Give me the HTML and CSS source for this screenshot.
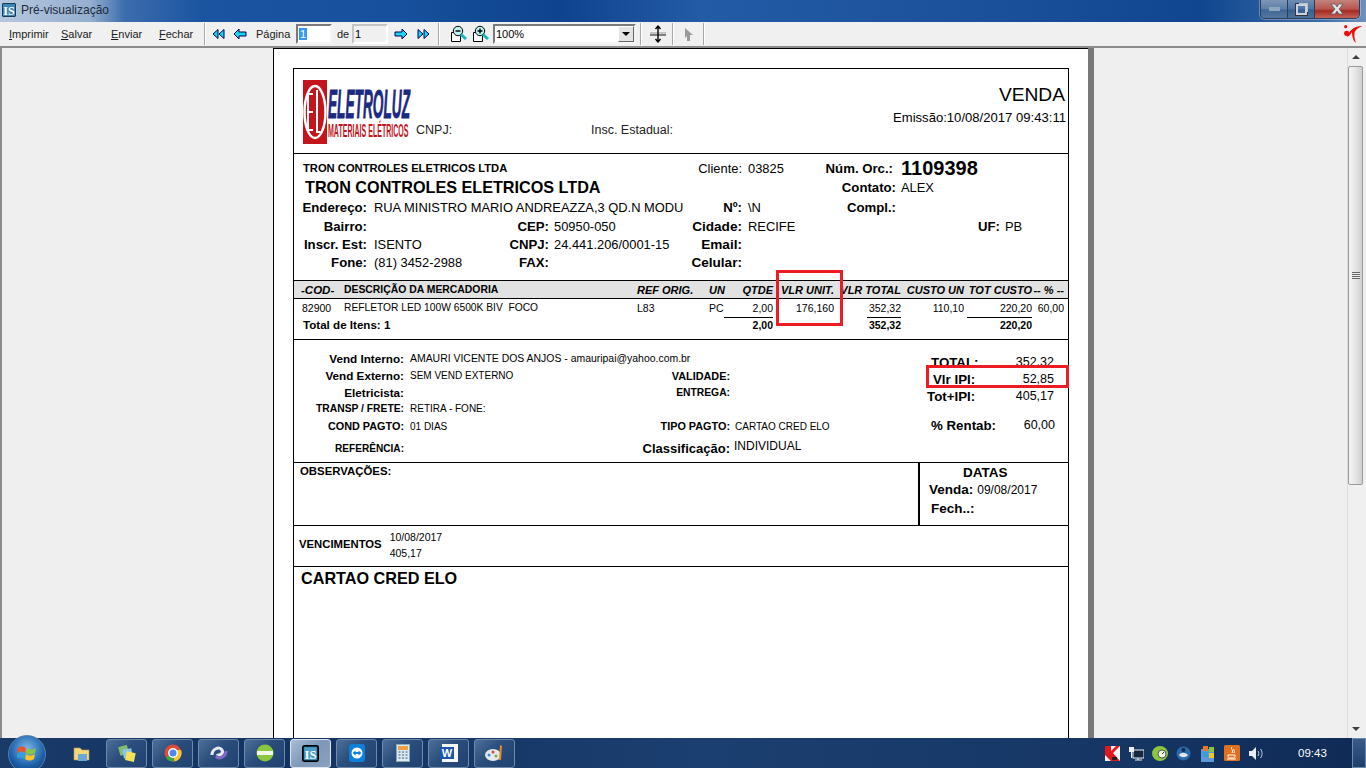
FILE: index.html
```html
<!DOCTYPE html>
<html lang="pt-BR">
<head>
    <meta charset="UTF-8">
    <title>Pré-visualização</title>
    <link rel="stylesheet" href="styles.css">
</head>
<body>
<div class="window">

    <div class="titlebar">
        <svg class="app_icon" width="16" height="16" viewBox="0 0 16 16"><rect x=".5" y=".5" width="15" height="15" rx="2" fill="#123a5c" stroke="#bcd"/><rect x="2" y="2" width="12" height="12" fill="#3c86b8"/><text x="8" y="13" text-anchor="middle" class="app_icon_text">IS</text></svg>
        <span class="title_text">Pré-visualização</span>
        <div class="win_buttons">
            <div class="win_btn win_min"><i></i></div>
            <div class="win_btn win_max"><i></i></div>
            <div class="win_btn win_close">
                <svg width="16" height="12" viewBox="0 0 16 12"><path d="M2 1h4l2 3 2-3h4l-4 5 4 5h-4l-2-3-2 3H2l4-5z" fill="#e4e6ee" stroke="#555" stroke-width=".7"/></svg>
            </div>
        </div>
    </div>

    <div class="toolbar">
        <span class="tool_text t_print"><u>I</u>mprimir</span>
        <span class="tool_text t_save"><u>S</u>alvar</span>
        <span class="tool_text t_send"><u>E</u>nviar</span>
        <span class="tool_text t_close"><u>F</u>echar</span>
        <div class="tb_sep sep1"></div>

        <svg class="nav nav1" width="14" height="12" viewBox="0 0 14 12"><path d="M6 1.500 1 6l5 4.500zM12 1.500 7 6l5 4.500z" fill="#19d6ee" stroke="#00005a"/></svg>
        <svg class="nav nav2" width="14" height="12" viewBox="0 0 14 12"><path d="M6 1 1 6l5 5V8h7V4H6z" fill="#19d6ee" stroke="#00005a"/></svg>
        <span class="tool_text t_page">Página</span>
        <span class="page_input"><b>1</b></span>
        <span class="tool_text t_de">de</span>
        <span class="page_total">1</span>
        <svg class="nav nav3" width="14" height="12" viewBox="0 0 14 12"><path d="M8 1l5 5-5 5V8H1V4h7z" fill="#19d6ee" stroke="#00005a"/></svg>
        <svg class="nav nav4" width="14" height="12" viewBox="0 0 14 12"><path d="M2 1.500 7 6l-5 4.500zM8 1.500 13 6l-5 4.500z" fill="#19d6ee" stroke="#00005a"/></svg>
        <div class="tb_sep sep2"></div>

        <svg class="zoom_icon zi1" width="17" height="18" viewBox="0 0 17 18"><path d="M1.500 7.500v9h9v-9z" fill="#fff" stroke="#000"/><circle cx="8" cy="6" r="4.700" fill="#bff4f4" stroke="#000"/><path d="M5.500 6h5" stroke="#000" stroke-width="1.400"/><path d="M11 9.500l5 4.500" stroke="#10b8c0" stroke-width="3"/></svg>
        <svg class="zoom_icon zi2" width="17" height="18" viewBox="0 0 17 18"><path d="M1.500 7.500v9h9v-9z" fill="#fff" stroke="#000"/><circle cx="8" cy="6" r="4.700" fill="#bff4f4" stroke="#000"/><path d="M5.500 6h5M8 3.500v5" stroke="#000" stroke-width="1.400"/><path d="M11 9.500l5 4.500" stroke="#10b8c0" stroke-width="3"/></svg>
        <div class="zoom_combo">
            <span>100%</span>
            <span class="combo_btn"><i></i></span>
        </div>
        <div class="tb_sep sep3"></div>
        <svg class="fit_icon" width="16" height="18" viewBox="0 0 16 18"><rect x="0" y="7" width="16" height="2" fill="#c4c4c4"/><rect x="0" y="9" width="16" height="2" fill="#808080"/><path d="M8 1v16M5.500 4 8 1l2.500 3M5.500 14 8 17l2.500-3" fill="none" stroke="#000" stroke-width="1.400"/></svg>
        <div class="tb_sep sep4"></div>
        <svg class="cursor_icon" width="9" height="13" viewBox="0 0 9 13"><path d="M0 0l8 7H5v6H2V8L0 10z" fill="#9a9a9a"/></svg>
        <div class="tb_sep sep5"></div>
        <svg class="brand_icon" width="20" height="20" viewBox="0 0 20 20"><circle cx="2.700" cy="2.700" r="1.600" fill="#f00b0b"/><circle cx="3.700" cy="9.300" r="2.600" fill="#f00b0b"/><path d="M4 13C6 8 9 2 19.500 2 15 4 12 6 11.500 9 11 13 12 16 13 19L11 17C9.500 14 9 11 9 8 7.500 10 7 12 4 13z" fill="#f00b0b"/></svg>
    </div>

    <div class="viewer">
        <div class="canvas">
            <div class="paper">
                <div class="report">

                    <div class="band head_band">
                        <svg class="logo" width="108" height="66" viewBox="0 0 108 66">
                            <rect x="0" y="0" width="24" height="64" fill="#c3161c"/>
                            <ellipse cx="12" cy="32" rx="10.500" ry="26" fill="none" stroke="#fff" stroke-width="2.500"/>
                            <path d="M10 14H5v36h5M5 32h5M14 10v42h5" fill="none" stroke="#fff" stroke-width="2"/>
                            <text transform="translate(25 38) scale(.342 1)" class="logo_top">ELETROLUZ</text>
                            <text transform="translate(25 57) scale(.392 1)" class="logo_sub">MATERIAIS ELÉTRICOS</text>
                        </svg>
                        <span class="head_field">CNPJ:</span>
                        <span class="head_field head_ie">Insc. Estadual:</span>
                        <div class="head_right">
                            <div class="doc_title">VENDA</div>
                            <div class="doc_date">Emissão:10/08/2017 09:43:11</div>
                        </div>
                    </div>

                    <div class="band client_band">
                        <div class="c_wide c_small_name">TRON CONTROLES ELETRICOS LTDA</div>
                        <div class="c_e c_plain">Cliente:</div><div class="c_f">03825</div>
                        <div class="c_g lbl c_num">Núm. Orc.:</div><div class="c_h order_no">1109398</div>

                        <div class="c_wide c_big_name">TRON CONTROLES ELETRICOS LTDA</div>
                        <div class="c_g lbl">Contato:</div><div class="c_h">ALEX</div>

                        <div class="c_a lbl">Endereço:</div><div class="c_street">RUA MINISTRO MARIO ANDREAZZA,3 QD.N MODU</div>
                        <div class="c_e lbl c_short">Nº:</div><div class="c_f">\N</div>
                        <div class="c_g lbl">Compl.:</div>

                        <div class="c_a lbl">Bairro:</div>
                        <div class="c_c lbl">CEP:</div><div class="c_d">50950-050</div>
                        <div class="c_e lbl">Cidade:</div><div class="c_f">RECIFE</div>
                        <div class="c_i lbl">UF:</div><div class="c_j">PB</div>

                        <div class="c_a lbl">Inscr. Est:</div><div class="c_b">ISENTO</div>
                        <div class="c_c lbl">CNPJ:</div><div class="c_d">24.441.206/0001-15</div>
                        <div class="c_e lbl">Email:</div>

                        <div class="c_a lbl">Fone:</div><div class="c_b">(81) 3452-2988</div>
                        <div class="c_c lbl">FAX:</div>
                        <div class="c_e lbl">Celular:</div>
                    </div>

                    <div class="band items_band">
                        <div class="item_row item_head">
                            <span class="i_cod"><em>-COD-</em></span>
                            <span class="i_desc">DESCRIÇÃO DA MERCADORIA</span>
                            <span><em>REF ORIG.</em></span>
                            <span><em>UN</em></span>
                            <span class="num"><em>QTDE</em></span>
                            <span class="num"><em>VLR UNIT.</em></span>
                            <span class="num"><em>VLR TOTAL</em></span>
                            <span class="num"><em>CUSTO UN</em></span>
                            <span class="num"><em>TOT CUSTO</em></span>
                            <span class="num"><em>-- % --</em></span>
                        </div>
                        <div class="item_row item_line">
                            <span class="i_code">82900</span>
                            <span class="i_text">REFLETOR LED 100W 6500K BIV&nbsp; FOCO</span>
                            <span>L83</span>
                            <span>PC</span>
                            <span class="num">2,00</span>
                            <span class="num">176,160</span>
                            <span class="num">352,32</span>
                            <span class="num">110,10</span>
                            <span class="num">220,20</span>
                            <span class="num">60,00</span>
                        </div>
                        <div class="item_row item_total">
                            <span class="i_total_label">Total de Itens: 1</span>
                            <span></span>
                            <span></span>
                            <span></span>
                            <span class="num sum sum_qty"><b>2,00</b></span>
                            <span></span>
                            <span class="num sum"><b>352,32</b></span>
                            <span></span>
                            <span class="num sum sum_cost"><b>220,20</b></span>
                            <span></span>
                        </div>
                    </div>

                    <div class="band info_band">
                        <div class="info_grid">
                            <div class="lbl_s lbl_m">Vend Interno:</div><div class="val_s val_wide">AMAURI VICENTE DOS ANJOS - amauripai@yahoo.com.br</div>

                            <div class="lbl_s lbl_m">Vend Externo:</div><div class="val_s">SEM VEND EXTERNO</div>
                            <div class="lbl_s lbl_w">VALIDADE:</div><div></div>

                            <div class="lbl_s lbl_m">Eletricista:</div><div></div>
                            <div class="lbl_s">ENTREGA:</div><div></div>

                            <div class="lbl_s">TRANSP / FRETE:</div><div class="val_s">RETIRA - FONE:</div>
                            <div></div><div></div>

                            <div class="lbl_s lbl_w">COND PAGTO:</div><div class="val_s">01 DIAS</div>
                            <div class="lbl_s lbl_w">TIPO PAGTO:</div><div class="val_s val_tipo">CARTAO CRED ELO</div>

                            <div class="lbl_s lbl_n">REFERÊNCIA:</div><div></div>
                            <div class="lbl_class">Classificação:</div><div class="val_class">INDIVIDUAL</div>
                        </div>
                        <div class="totals">
                            <div class="tot_row"><b>TOTAL:</b><span>352,32</span></div>
                            <div class="tot_row"><b class="tot_l2">Vlr IPI:</b><span>52,85</span></div>
                            <div class="tot_row"><b class="tot_l3">Tot+IPI:</b><span>405,17</span></div>
                            <div class="tot_row tot_rent"><b>% Rentab:</b><span>60,00</span></div>
                        </div>
                    </div>

                    <div class="band obs_band">
                        <div class="obs_left">OBSERVAÇÕES:</div>
                        <div class="obs_right">
                            <div class="dates_title">DATAS</div>
                            <div class="date_row"><b>Venda:</b><span>09/08/2017</span></div>
                            <div class="date_row date_fech"><b>Fech..:</b></div>
                        </div>
                    </div>

                    <div class="band due_band">
                        <b>VENCIMENTOS</b>
                        <div class="due_vals">
                            <div>10/08/2017</div>
                            <div>405,17</div>
                        </div>
                    </div>

                    <div class="pay_band">CARTAO CRED ELO</div>

                    <div class="mark mark_unit"></div>
                    <div class="mark mark_ipi"></div>
                </div>
            </div>
        </div>

        <div class="vscroll">
            <div class="sb_btn"><i class="arrow_up"></i></div>
            <div class="sb_thumb"><div class="sb_grip"></div></div>
            <div class="sb_track"></div>
            <div class="sb_btn"><i class="arrow_down"></i></div>
        </div>
    </div>

    <div class="taskbar">
        <div class="orb">
            <svg width="20" height="20" viewBox="0 0 20 20"><path d="M1 4c3-2 5-2 8 0l-1 5c-3-2-5-2-8 0z" fill="#e8532b"/><path d="M10 4c3 2 5 2 9 0l-1 5c-3 2-6 2-9 0z" fill="#8bc43f"/><path d="M0 10c3-2 5-2 8 0l-1 5c-3-2-5-2-8 0z" fill="#32a0dd"/><path d="M9 10c3 2 5 2 9 0l-1 5c-3 2-6 2-9 0z" fill="#f8c42b"/></svg>
        </div>
        <div class="task_plain">
            <svg width="18" height="17" viewBox="0 0 18 17"><path d="M1 3h6l2 2h7v10H1z" fill="#f3d77c" stroke="#b99b4a" stroke-width=".6"/><rect x="5" y="9" width="9" height="7" fill="#6aa6d8"/></svg>
        </div>
        <div class="task_btn">
            <svg width="20" height="20" viewBox="0 0 20 20"><rect x="2" y="3" width="9" height="9" fill="#7fbf6a" transform="rotate(-15 6 7)"/><rect x="6" y="6" width="9" height="9" fill="#8fc6e8" transform="rotate(-10 10 10)"/><rect x="9" y="9" width="9" height="9" fill="#f5e25a" transform="rotate(12 13 13)"/></svg>
        </div>
        <div class="task_btn">
            <svg width="18" height="18" viewBox="0 0 18 18"><circle cx="9" cy="9" r="8.500" fill="#dd4b39"/><path d="M9 9 1.800 13.500A8.500 8.500 0 0 0 10.500 17.400z" fill="#3da746"/><path d="M9 9 10.500 17.400A8.500 8.500 0 0 0 17 6H9z" fill="#f7c92e"/><circle cx="9" cy="9" r="4.200" fill="#4a8af0" stroke="#fff" stroke-width="1.400"/></svg>
        </div>
        <div class="task_btn">
            <svg width="20" height="18" viewBox="0 0 20 18"><path d="M3 11c0-6 7-9 10-5 2 3-3 7-5 4" fill="none" stroke="#e8e8f4" stroke-width="3"/><path d="M17 7c0 6-7 9-10 5" fill="none" stroke="#8468c8" stroke-width="3"/></svg>
        </div>
        <div class="task_btn">
            <svg width="18" height="18" viewBox="0 0 18 18"><circle cx="9" cy="9" r="8.500" fill="#8cc63e"/><rect x="1" y="7" width="16" height="4" fill="#f2f7e6"/></svg>
        </div>
        <div class="task_btn task_active">
            <svg width="17" height="17" viewBox="0 0 16 16"><rect x=".5" y=".5" width="15" height="15" rx="2" fill="#0c2a40" stroke="#000"/><rect x="2" y="2" width="12" height="12" fill="#4aa0c8"/><text x="8" y="13" text-anchor="middle" class="app_icon_text">IS</text></svg>
        </div>
        <div class="task_btn">
            <svg width="16" height="18" viewBox="0 0 16 18"><rect x="0" y="0" width="16" height="18" rx="3" fill="#0e7fd6"/><circle cx="8" cy="9" r="5.500" fill="#fff"/><path d="M3.500 9 6.500 6.500v5zM12.500 9 9.500 6.500v5z" fill="#0e7fd6"/><rect x="6" y="8" width="4" height="2" fill="#0e7fd6"/></svg>
        </div>
        <div class="task_btn">
            <svg width="14" height="18" viewBox="0 0 14 18"><rect x=".5" y=".5" width="13" height="17" fill="#dfe8f0" stroke="#8aa"/><rect x="2" y="2" width="10" height="4" fill="#e8a048"/><path d="M2.500 8h9M2.500 11h9M2.500 14h9" stroke="#6c8aa8" stroke-width="1.600" stroke-dasharray="2 1.500"/></svg>
        </div>
        <div class="task_btn">
            <svg width="18" height="18" viewBox="0 0 18 18"><rect x="2" y="0" width="16" height="18" fill="#f4f6fa"/><rect x="0" y="3" width="14" height="12" fill="#1c56a8"/><text x="7" y="13" text-anchor="middle" class="word_w">W</text></svg>
        </div>
        <div class="task_btn">
            <svg width="20" height="18" viewBox="0 0 20 18"><ellipse cx="8" cy="11" rx="8" ry="6" fill="#e6e8ec"/><circle cx="4" cy="11" r="1.500" fill="#3a8ad0"/><circle cx="8" cy="8" r="1.500" fill="#d04a3a"/><circle cx="11" cy="12" r="1.500" fill="#6ab04a"/><path d="M15 1l2 1-1 14h-2z" fill="#e88a2a"/></svg>
        </div>

        <div class="tray">
            <svg class="tray_k" width="15" height="15" viewBox="0 0 15 15"><rect width="15" height="15" fill="#f4f4f4"/><path d="M0 0h6v5l5-5h4L8 7l7 8H6L0 9z" fill="#e1191f"/><path d="M7 11h5v3H7z" fill="#222"/></svg>
            <svg class="tray_net" width="15" height="15" viewBox="0 0 15 15"><rect x="4" y="4" width="11" height="8" fill="#16283f" stroke="#eee"/><path d="M6 14h7M9 12v2" stroke="#eee"/><rect x="0" y="1" width="5" height="5" fill="#eee"/><path d="M2.500 6v6" stroke="#eee"/></svg>
            <svg class="tray_green" width="16" height="15" viewBox="0 0 16 15"><ellipse cx="8" cy="7.500" rx="8" ry="7.500" fill="#8cc63e"/><circle cx="10" cy="8" r="4" fill="#eef6e0" stroke="#555"/><path d="M10 8l2-2" stroke="#333"/></svg>
            <svg class="tray_blue" width="15" height="15" viewBox="0 0 15 15"><circle cx="7.500" cy="7.500" r="7" fill="#2a6aa8"/><path d="M3 9c2-3 6-3 9 0-2 3-7 3-9 0z" fill="#dfe8f0"/><circle cx="7.500" cy="4" r="2" fill="#122a48"/></svg>
            <svg class="tray_win" width="16" height="17" viewBox="0 0 16 17"><rect x="1" y="4" width="13" height="13" fill="#5a9ad8"/><path d="M3 1h5v5H3z" fill="#e8782a"/><path d="M9 2h5v5H9z" fill="#8bc43f"/><path d="M3 7h5v5H3z" fill="#32a0dd"/><path d="M9 8h5v5H9z" fill="#f8c42b"/></svg>
            <svg class="tray_java" width="16" height="16" viewBox="0 0 16 16"><rect width="16" height="16" rx="1.500" fill="#e0701e"/><path d="M4 10h7v1.500c0 1-1 1.500-2 1.500H6c-1 0-2-.5-2-1.500zM3 14h9M8 2c-2 2 2 3 0 6M10 4c-1 1 1 2 0 4" fill="none" stroke="#fff"/></svg>
            <svg class="tray_sound" width="15" height="15" viewBox="0 0 15 15"><path d="M0 5h3l4-4v13l-4-4H0z" fill="#e8edf2"/><path d="M9 5c1 1.500 1 3.500 0 5M11.500 3c2 2.500 2 6.500 0 9" fill="none" stroke="#c8d4de"/></svg>
            <span class="clock">09:43</span>
            <div class="show_desktop"></div>
        </div>
    </div>

</div>
</body>
</html>
```

FILE: styles.css
```css
html, body {
    margin: 0;
    padding: 0;
    height: 768px;
    overflow: hidden;
}

body {
    font-family: "Liberation Sans", Arial, sans-serif;
    color: #000;
}

.window {
    width: 1366px;
    height: 768px;
    display: flex;
    flex-direction: column;
    overflow: hidden;
    background-color: #f0f0f0;
}

/* title bar */
.titlebar {
    height: 22px;
    flex: none;
    display: flex;
    align-items: center;
    padding-left: 1px;
    box-sizing: border-box;
    background-image:
        linear-gradient(90deg, rgba(190,205,225,.95) 0, rgba(170,190,215,.85) 90px, rgba(90,130,185,.5) 125px, rgba(20,70,140,0) 200px),
        linear-gradient(90deg, #1f5aa5 0, #17509c 400px, #0e438f 560px, #245ba6 700px, #1a5099 1000px, #0f468f 1200px, #3a6ba8 1320px, #6d90bc 1366px);
}

.app_icon {
    flex: none;
    margin-bottom: 2px;
}

.app_icon_text {
    font-family: "Liberation Serif", serif;
    font-weight: bold;
    font-size: 12px;
    fill: #fff;
}

.title_text {
    font-size: 12px;
    margin-left: 4px;
    margin-bottom: 3px;
    color: #1c2a3a;
}

.win_buttons {
    display: flex;
    margin-left: auto;
    margin-right: 6px;
    align-self: flex-start;
    height: 18px;
    border: 1px solid #2c3f58;
    border-top: none;
    border-radius: 0 0 5px 5px;
    overflow: hidden;
    box-shadow: 0 0 0 1px rgba(255,255,255,.3);
}

.win_btn {
    display: flex;
    align-items: center;
    justify-content: center;
    border-right: 1px solid #2c3f58;
    box-sizing: border-box;
}

.win_min {
    width: 27px;
    background-image: linear-gradient(#7d96b6, #5c7ea8 50%, #3f6596 55%, #55789f);
}

.win_min i {
    width: 11px;
    height: 4px;
    background-color: #8fa6bf;
}

.win_max {
    width: 27px;
    background-image: linear-gradient(#6f8cb2, #4c73a3 50%, #37608f 55%, #4d7198);
}

.win_max i {
    width: 7px;
    height: 7px;
    border: 2px solid #c9d2dc;
    box-shadow: 2px -2px 0 -1px #b8c2cd, 0 0 0 1px #334;
}

.win_close {
    width: 44px;
    border-right: none;
    background-image: linear-gradient(#c2837d, #b8554e 50%, #a52a22 60%, #c4635a);
}

/* toolbar */
.toolbar {
    height: 24px;
    flex: none;
    display: flex;
    align-items: center;
    background-color: #f0f0f0;
    border-bottom: 2px solid #8c8c8c;
    box-sizing: content-box;
}

.tool_text {
    font-size: 11px;
    color: #1a1a1a;
    flex: none;
}

.t_print { margin-left: 9px; width: 52px; }
.t_save { width: 50px; }
.t_send { width: 48px; }
.t_close { width: 45px; }

.tb_sep {
    width: 1px;
    height: 22px;
    flex: none;
    background-color: #a8a8a8;
    border-right: 1px solid #fff;
}

.nav { flex: none; }
.nav1 { margin-left: 6px; }
.nav2 { margin-left: 7px; }
.t_page { margin-left: 9px; width: 40px; }

.page_input, .page_total {
    width: 36px;
    height: 20px;
    flex: none;
    box-sizing: border-box;
    font-size: 11px;
    line-height: 16px;
    padding-left: 1px;
    border: 2px solid;
}

.page_input {
    background-color: #fff;
    border-color: #7a7a7a #f4f4f4 #f4f4f4 #7a7a7a;
}

.page_input b {
    font-weight: normal;
    background-color: #3399ff;
    color: #fff;
    padding: 0 1px;
}

.t_de { margin-left: 5px; width: 15px; }

.page_total {
    border-color: #c4c4c4 #fff #fff #c4c4c4;
}

.nav3 { margin-left: 6px; }
.nav4 { margin-left: 8px; }
.sep2 { margin-left: 8px; }
.zi1 { margin-left: 10px; }
.zi2 { margin-left: 5px; }

.zoom_combo {
    width: 143px;
    height: 20px;
    flex: none;
    margin-left: 4px;
    display: flex;
    align-items: center;
    justify-content: space-between;
    box-sizing: border-box;
    background-color: #fff;
    border: 2px solid;
    border-color: #7a7a7a #f4f4f4 #f4f4f4 #7a7a7a;
    font-size: 11px;
    padding-left: 1px;
}

.combo_btn {
    width: 16px;
    height: 16px;
    display: flex;
    align-items: center;
    justify-content: center;
    background-color: #e4e4e4;
    border: 1px solid;
    border-color: #fff #666 #666 #fff;
    box-sizing: border-box;
}

.combo_btn i {
    border: 4px solid transparent;
    border-top: 4px solid #000;
    border-bottom: none;
}

.sep3 { margin-left: 4px; }
.fit_icon { margin-left: 8px; flex: none; }
.sep4 { margin-left: 6px; }
.cursor_icon { margin-left: 11px; flex: none; }
.sep5 { margin-left: 9px; }
.brand_icon { margin-left: auto; margin-right: 3px; flex: none; }

/* preview area */
.viewer {
    flex: 1;
    min-height: 0;
    display: flex;
}

.canvas {
    flex: 1;
    min-width: 0;
    overflow: hidden;
    background-color: #efefef;
    border-left: 2px solid #8c8c8c;
    box-sizing: border-box;
    padding-left: 271px;
}

.paper {
    width: 815px;
    height: 760px;
    background-color: #fff;
    border-top: 1px solid #000;
    border-left: 1px solid #000;
    box-shadow: 6px 0 0 #787878;
    padding: 19px 0 0 19px;
    box-sizing: border-box;
}

.report {
    position: relative;
    width: 776px;
    height: 740px;
    box-sizing: border-box;
    border: 1px solid #000;
}

.band {
    border-bottom: 1px solid #000;
    box-sizing: border-box;
}

/* report header */
.head_band {
    height: 85px;
    display: flex;
    align-items: flex-start;
    padding: 11px 2px 0 9px;
    font-size: 12.500px;
}

.logo {
    flex: none;
    overflow: visible;
}

.logo_top {
    font-family: "Liberation Sans", sans-serif;
    font-weight: bold;
    font-style: italic;
    font-size: 40px;
    fill: #1c2a80;
    stroke: #1c2a80;
    stroke-width: .8px;
}

.logo_sub {
    font-family: "Liberation Sans", sans-serif;
    font-weight: bold;
    font-size: 18px;
    fill: #c3161c;
}

.head_field {
    margin-top: 43px;
    margin-left: 5px;
    width: 175px;
    color: #222;
}

.head_ie {
    margin-left: 0;
    width: auto;
}

.head_right {
    margin-left: auto;
    text-align: right;
    padding-top: 4px;
}

.doc_title {
    font-size: 19.200px;
    line-height: 21px;
    margin-right: 1px;
}

.doc_date {
    font-size: 13.100px;
    line-height: 14px;
    margin-top: 6px;
}

/* client data */
.client_band {
    height: 127px;
    padding-top: 5px;
    display: grid;
    grid-template-columns: 73px 133px 49px 142px 51px 58px 96px 54px 50px 68px;
    grid-template-rows: 18px 20px 21px 17px 18px 18px;
    align-items: center;
    font-size: 12.900px;
    white-space: nowrap;
}

.lbl {
    font-size: 13.200px;
    font-weight: bold;
    text-align: right;
}

.c_wide { grid-column: 1 / 5; padding-left: 9px; }
.c_small_name { font-size: 11.200px; font-weight: bold; }
.c_big_name { font-size: 16.200px; font-weight: bold; padding-left: 11px; }
.c_a { grid-column: 1; }
.c_b { grid-column: 2; padding-left: 7px; }
.c_street { grid-column: 2 / 5; padding-left: 7px; }
.c_c { grid-column: 3; }
.c_d { grid-column: 4; padding-left: 5px; }
.c_e { grid-column: 5; text-align: right; }
.c_e.lbl { font-size: 13.600px; }
.c_e.c_short { font-size: 13.200px; }
.c_plain { font-weight: normal; }
.c_f { grid-column: 6; padding-left: 6px; }
.c_g { grid-column: 7; text-align: right; }
.c_num { padding-right: 3px; }
.c_h { grid-column: 8 / 10; padding-left: 5px; }
.c_i { grid-column: 9; }
.c_j { grid-column: 10; padding-left: 5px; }
.order_no { font-size: 20px; font-weight: bold; }

/* items */
.items_band {
    height: 59px;
    font-size: 10.500px;
}

.item_row {
    display: grid;
    grid-template-columns: 50px 293px 72px 35px 29px 61px 67px 63px 68px 32px;
    align-items: center;
    white-space: nowrap;
}

.num {
    text-align: right;
    justify-self: end;
}

.item_head {
    height: 18px;
    font-size: 11px;
    font-weight: bold;
    background-color: #e2e2e2;
    border-bottom: 1px solid #000;
    box-sizing: border-box;
}

.item_head em { font-style: italic; }

.i_cod { padding-left: 7px; font-size: 11.500px; }
.i_desc { font-size: 10.400px; }
.i_code { padding-left: 8px; }
.i_text { font-size: 10.250px; }

.item_line {
    height: 17px;
}

.item_total {
    align-items: start;
    padding-top: 1px;
}

.i_total_label {
    padding-left: 9px;
    font-size: 11.600px;
    font-weight: bold;
    padding-top: 1px;
}

.sum b {
    display: inline-block;
    border-top: 1px solid #000;
    padding-top: 1px;
    line-height: 13px;
    min-width: 34px;
}

.sum_qty b { min-width: 49px; }
.sum_cost b { min-width: 65px; }

/* vendor and totals */
.info_band {
    height: 123px;
    display: flex;
    padding-top: 10px;
}

.info_grid {
    width: 626px;
    display: grid;
    grid-template-columns: 110px 256px 70px 190px;
    grid-template-rows: 17px 17px 16px 17px 18px 26px;
    align-items: center;
    font-size: 10px;
    white-space: nowrap;
}

.lbl_s {
    font-weight: bold;
    text-align: right;
    font-size: 10.300px;
}

.lbl_m { font-size: 11.700px; }
.lbl_w { font-size: 10.850px; }
.lbl_n { font-size: 10.100px; }

.val_s { padding-left: 6px; }
.val_tipo { padding-left: 5px; }

.val_wide {
    grid-column: 2 / 5;
    font-size: 10.450px;
}

.lbl_class {
    font-size: 13px;
    font-weight: bold;
    text-align: right;
    margin-left: -30px;
}

.val_class {
    font-size: 12px;
    padding-left: 4px;
    padding-bottom: 4px;
}

.totals {
    width: 149px;
    padding-top: 4px;
    font-size: 12.500px;
}

.tot_row {
    display: flex;
    justify-content: space-between;
    height: 17px;
    line-height: 17px;
    width: 123px;
    margin-left: 11px;
}

.tot_row b { font-size: 13.300px; }

.tot_rent {
    margin-top: 12px;
    width: 124px;
}

.tot_l2 { margin-left: 2px; }
.tot_l3 { margin-left: -4px; }

/* observations */
.obs_band {
    height: 63px;
    display: flex;
}

.obs_left {
    flex: 1;
    padding: 2px 0 0 6px;
    font-size: 11.400px;
    font-weight: bold;
}

.obs_right {
    width: 150px;
    border-left: 2px solid #000;
    box-sizing: border-box;
    font-size: 13.500px;
}

.dates_title {
    font-weight: bold;
    padding: 2px 0 0 43px;
}

.date_row {
    display: flex;
    align-items: baseline;
    gap: 4px;
    padding-left: 9px;
    margin-top: 2px;
}

.date_row span { font-size: 12px; }
.date_fech { margin-top: 4px; padding-left: 11px; }

/* due dates */
.due_band {
    height: 41px;
    display: flex;
    align-items: flex-start;
    padding: 12px 0 0 5px;
    font-size: 11.300px;
}

.due_vals {
    margin: -9px 0 0 8px;
    font-size: 10.500px;
    line-height: 16px;
}

.pay_band {
    padding: 2px 0 0 7px;
    font-size: 16.200px;
    font-weight: bold;
}

/* red highlights drawn on top of the print */
.mark {
    position: absolute;
    border: 3px solid #ed1c24;
    box-sizing: border-box;
}

.mark_unit {
    left: 482px;
    top: 201px;
    width: 67px;
    height: 56px;
}

.mark_ipi {
    left: 632px;
    top: 296px;
    width: 143px;
    height: 23px;
}

/* scrollbar */
.vscroll {
    width: 19px;
    flex: none;
    display: flex;
    flex-direction: column;
    background-color: #f0f0f0;
    border-left: 1px solid #dcdcdc;
    padding-right: 3px;
    box-sizing: border-box;
}

.sb_btn {
    height: 18px;
    flex: none;
    display: flex;
    align-items: center;
    justify-content: center;
}

.arrow_up {
    border: 4px solid transparent;
    border-bottom: 4px solid #404040;
    border-top: none;
}

.arrow_down {
    border: 4px solid transparent;
    border-top: 4px solid #404040;
    border-bottom: none;
}

.sb_thumb {
    height: 419px;
    flex: none;
    display: flex;
    align-items: center;
    justify-content: center;
    box-sizing: border-box;
    border: 1px solid #9a9a9a;
    border-radius: 2px;
    background-image: linear-gradient(90deg, #f4f4f4, #e6e6e6 50%, #cfcfcf);
}

.sb_grip {
    width: 8px;
    height: 7px;
    background-image: repeating-linear-gradient(#666 0 1px, #eee 1px 2px);
}

.sb_track { flex: 1; }

/* windows taskbar */
.taskbar {
    height: 30px;
    flex: none;
    display: flex;
    align-items: center;
    background-image: linear-gradient(90deg, #1a3a6a 0, #123262 300px, #1b3f70 700px, #163766 1100px, #0f2a55 1366px);
    box-sizing: border-box;
    color: #fff;
}

.orb {
    width: 38px;
    height: 38px;
    flex: none;
    margin: 2px 0 0 8px;
    border-radius: 50%;
    display: flex;
    align-items: center;
    justify-content: center;
    background-image: radial-gradient(circle at 50% 35%, #7ab8e8, #1a5ea8 60%, #0c3468);
    border: 1px solid #5a80a8;
    box-sizing: border-box;
}

.task_plain {
    width: 18px;
    flex: none;
    display: flex;
    margin-left: 27px;
    margin-right: 15px;
}

.task_btn {
    width: 41px;
    height: 29px;
    flex: none;
    margin-right: 5px;
    display: flex;
    align-items: center;
    justify-content: center;
    box-sizing: border-box;
    border: 1px solid #6f8aa8;
    border-radius: 3px;
    background-image: linear-gradient(135deg, #4d6f98, #2a4d7c 45%, #1f4272);
}

.task_active {
    background-image: linear-gradient(135deg, #a9bdd4, #7f98b8 50%, #8aa2c0);
    border-color: #dde6f0;
}

.tray {
    margin-left: auto;
    display: flex;
    align-items: center;
    height: 100%;
}

.tray svg { flex: none; }
.tray_net { margin-left: 9px; }
.tray_green { margin-left: 8px; }
.tray_blue { margin-left: 8px; }
.tray_win { margin-left: 9px; }
.tray_java { margin-left: 8px; }
.tray_sound { margin-left: 9px; }

.clock {
    font-size: 11.500px;
    margin-left: 34px;
    width: 27px;
}

.show_desktop {
    width: 14px;
    height: 100%;
    margin-left: 27px;
    border: 1px solid #6f8aa8;
    box-sizing: border-box;
    background-image: linear-gradient(#3a5a88, #1e3e6c);
}

.word_w {
    font-family: "Liberation Sans", sans-serif;
    font-weight: bold;
    font-size: 11px;
    fill: #fff;
}
```
